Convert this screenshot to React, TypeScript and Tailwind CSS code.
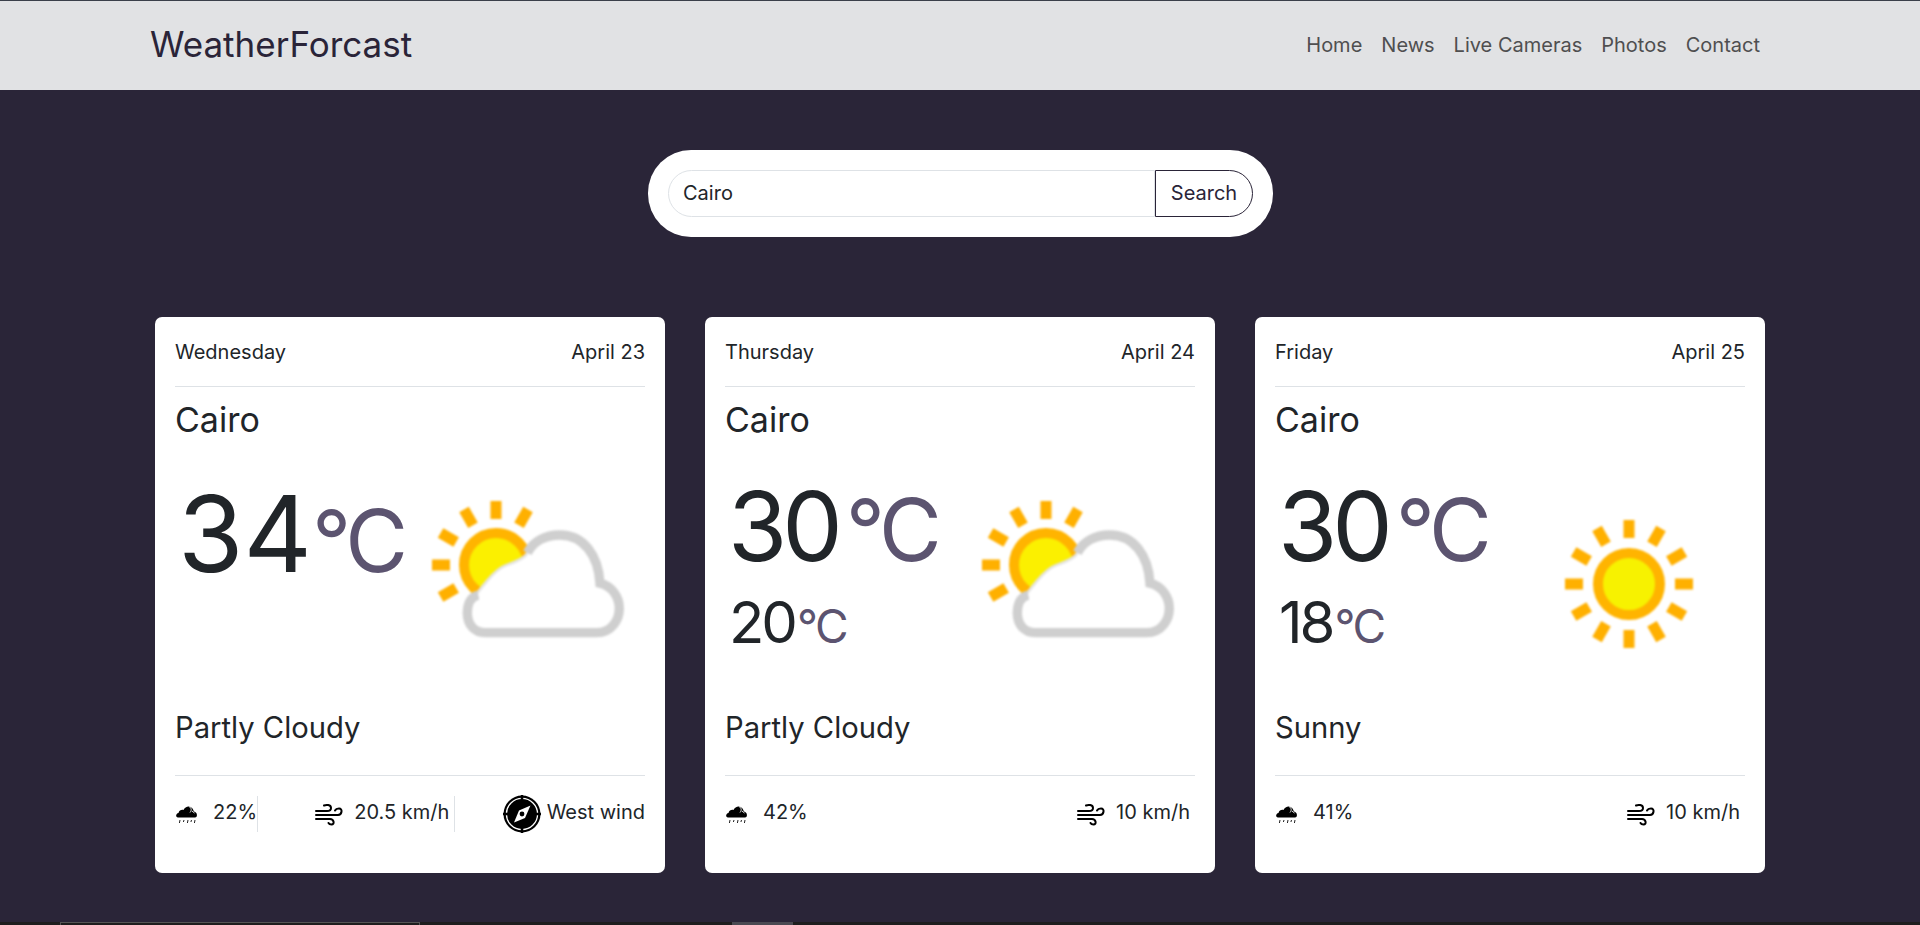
const ANGLES = [0, 30, 60, 90, 120, 150, 180, 210, 240, 270, 300, 330];

function Rays({ cx, cy, list }: { cx: number; cy: number; list: number[] }) {
  return (
    <>
      {list.map((a) => (
        <rect key={a} x={cx - 5.5} y={cy - 55 - 9} width={11} height={18} fill="#ffb000" transform={`rotate(${a} ${cx} ${cy})`} />
      ))}
    </>
  );
}

function PartlyCloudy() {
  return (
    <svg width="230" height="170" viewBox="0 0 230 170" className="blur-[1px] shrink-0">
      <Rays cx={76} cy={85} list={[240, 270, 300, 330, 0, 30]} />
      <circle cx={76} cy={85} r={32} fill="#fbf000" stroke="#ffb400" strokeWidth={10} />
      <g transform="scale(0.3333)">
        <path d="M195 458 H530 C575 458 598 420 598 385 C598 350 575 318 540 310 C535 225 490 165 420 165 C375 165 340 185 318 225 C300 245 265 250 245 262 C215 280 195 310 175 335 C150 345 140 375 140 400 C140 435 165 458 195 458 Z" fill="#ffffff" stroke="#e4e4e4" strokeWidth={8} />
        <path d="M175 345 C150 350 142 375 142 400 C142 435 165 458 195 458 H530 C575 458 598 420 598 385 C598 350 575 318 540 310 C535 225 490 165 420 165 C375 165 340 185 322 218" fill="none" stroke="#cfcfcf" strokeWidth={28} />
      </g>
    </svg>
  );
}

function Sunny() {
  return (
    <svg width="160" height="150" viewBox="0 0 160 150" className="blur-[1px] shrink-0">
      <Rays cx={80} cy={75} list={ANGLES} />
      <circle cx={80} cy={75} r={31} fill="#f7f200" stroke="#ffb400" strokeWidth={10} />
    </svg>
  );
}

function RainCloud() {
  return (
    <svg width="24" height="22" viewBox="0 0 24 22" className="shrink-0">
      <path d="M3 14.5 C0.5 14.5 0.5 10.5 3.5 10 C4 7 7 6.5 8.5 7 C10 3.5 14.5 2 17 5 C18 6 18.5 7.5 19 8.5 C22.5 9 23 14.5 20 14.5 Z" fill="#000" />
      <path d="M14 3.5 C17 5 16.5 8 15 9.5 M17 8 L19.5 10" stroke="#fff" strokeWidth="0.9" fill="none" />
      <path d="M5 17 L4.4 20 M9 17 L8.4 19 M13 17 L12.4 20 M16.5 17 L15.9 19 M20 17 L19.4 20" stroke="#222" strokeWidth="1" />
    </svg>
  );
}

function WindIcon() {
  return (
    <svg width="28" height="24" viewBox="0 0 28 24" className="shrink-0" fill="none" stroke="#000" strokeWidth="2" strokeLinecap="round">
      <path d="M9 3.5 C11 2.5 16 2.5 16 6 C16 8.5 14 9 12 9 H1" />
      <path d="M1 13 H23 C27 13 28 6.5 24 6.5 C22 6.5 20.5 7.5 20 8.5" />
      <path d="M1 17 H15 C19 17 20 22.5 16.5 22.5 C15 22.5 14 22 13.5 21" />
    </svg>
  );
}

function CompassIcon() {
  return (
    <svg width="38" height="38" viewBox="0 0 38 38" className="shrink-0">
      <circle cx={19} cy={19} r={18.5} fill="#000" />
      <circle cx={19} cy={19} r={15.6} fill="none" stroke="#fff" strokeWidth={1.3} />
      <path d="M19 0 V5 M19 33 V38 M0 19 H5 M33 19 H38" stroke="#000" strokeWidth={2.5} />
      <path d="M27.5 10.5 L22 23 L11 27.5 L16 15.5 Z" fill="#fff" />
      <circle cx={19} cy={19} r={2.4} fill="#000" />
    </svg>
  );
}

type Stat = { pct: string; speed: string; dir?: boolean };
type Day = { day: string; date: string; hi: string; lo?: string; cond: string; icon: "pc" | "sun"; stat: Stat };

const days: Day[] = [
  { day: "Wednesday", date: "April 23", hi: "34", cond: "Partly Cloudy", icon: "pc", stat: { pct: "22%", speed: "20.5 km/h", dir: true } },
  { day: "Thursday", date: "April 24", hi: "30", lo: "20", cond: "Partly Cloudy", icon: "pc", stat: { pct: "42%", speed: "10 km/h" } },
  { day: "Friday", date: "April 25", hi: "30", lo: "18", cond: "Sunny", icon: "sun", stat: { pct: "41%", speed: "10 km/h" } },
];

function Card({ d }: { d: Day }) {
  return (
    <div className="w-[510px] h-[556px] bg-white rounded-[7px] px-5 flex flex-col text-[#212529]">
      <div className="h-[70px] flex items-center justify-between border-b border-[#dee2e6] text-[20px]">
        <span>{d.day}</span>
        <span>{d.date}</span>
      </div>
      <div className="text-[34px] leading-[40px] mt-[13px]">Cairo</div>
      <div className="flex items-start justify-between h-[276px]">
        {d.lo ? (
          <div className="pl-[3px] pt-[31px]">
            <div className="leading-[110px] text-[96px] tracking-[-5px] whitespace-nowrap">
              {d.hi}
              <span className="text-[#5c5470] text-[86px] ml-[8px]">°C</span>
            </div>
            <div className="leading-[72px] text-[58px] tracking-[-3px] mt-[1px] ml-[1px] whitespace-nowrap">
              {d.lo}
              <span className="text-[#5c5470] text-[46px] tracking-[-2.5px] ml-[2px]">°C</span>
            </div>
          </div>
        ) : (
          <div className="pl-[3px] pt-[39px]">
            <div className="leading-[110px] text-[106px] whitespace-nowrap">
              {d.hi}
              <span className="text-[#5c5470] text-[86px] tracking-[-5px]">°C</span>
            </div>
          </div>
        )}
        {d.icon === "pc" ? (
          <div className="mt-[40px] -mr-[5px] shrink-0">
            <PartlyCloudy />
          </div>
        ) : (
          <div className="mt-[69px] mr-[36px] shrink-0">
            <Sunny />
          </div>
        )}
      </div>
      <div className="text-[29.2px] leading-[38px] mt-[-7px]">{d.cond}</div>
      <div className="h-[1px] bg-[#dee2e6] mt-[28px]"></div>
      <div className="flex items-center justify-between text-[20px] mt-[20px] h-[36px]">
        <div className={`flex items-center h-full ${d.stat.dir ? "border-r border-[#dee2e6]" : ""}`}>
          <RainCloud />
          <span className="ml-[14px] -mt-[5px]">{d.stat.pct}</span>
        </div>
        <div className={`flex items-center h-full pr-[5px] ml-[10px] ${d.stat.dir ? "border-r border-[#dee2e6]" : ""}`}>
          <WindIcon />
          <span className="ml-[11px] -mt-[5px]">{d.stat.speed}</span>
        </div>
        {d.stat.dir && (
          <div className="flex items-center h-full">
            <CompassIcon />
            <span className="ml-[6px] -mt-[5px]">West wind</span>
          </div>
        )}
      </div>
    </div>
  );
}

export default function App() {
  return (
    <div className="h-[925px] overflow-hidden flex flex-col bg-[#2a2538]" style={{ fontFamily: "Inter, 'Liberation Sans', sans-serif" }}>
      <div className="h-[1px] bg-[#3a3f4a]"></div>
      <nav className="h-[89px] bg-[#e1e2e4] flex items-center justify-between pl-[150px] pr-[160px]">
        <span className="text-[35px] text-[#2a2438] -mt-[2px]">WeatherForcast</span>
        <div className="flex gap-[19px] text-[20px] text-[#4f4f50] -mt-[1px]">
          <span>Home</span>
          <span>News</span>
          <span>Live Cameras</span>
          <span>Photos</span>
          <span>Contact</span>
        </div>
      </nav>
      <div className="flex-1 min-h-0">
        <div className="w-[625px] h-[87px] mt-[60px] ml-[648px] bg-white rounded-[43px] flex items-center px-5">
          <div className="flex-1 h-[47px] border border-[#dee2e6] rounded-l-[24px] flex items-center pl-[14px] pb-[2px] text-[20px] text-[#212529]">Cairo</div>
          <div className="w-[98px] h-[47px] border border-[#2a2438] rounded-r-[24px] flex items-center justify-center pb-[2px] text-[20px] text-[#2a2438]">Search</div>
        </div>
        <div className="flex gap-[40px] pl-[155px] mt-[80px]">
          {days.map((d) => (
            <Card key={d.day} d={d} />
          ))}
        </div>
      </div>
      <div className="h-[3px] bg-[#1e1e1e] flex">
        <div className="ml-[60px] w-[360px] border-t border-x border-[#555]"></div>
        <div className="ml-[312px] w-[61px] bg-[#4a4a52]"></div>
      </div>
    </div>
  );
}
